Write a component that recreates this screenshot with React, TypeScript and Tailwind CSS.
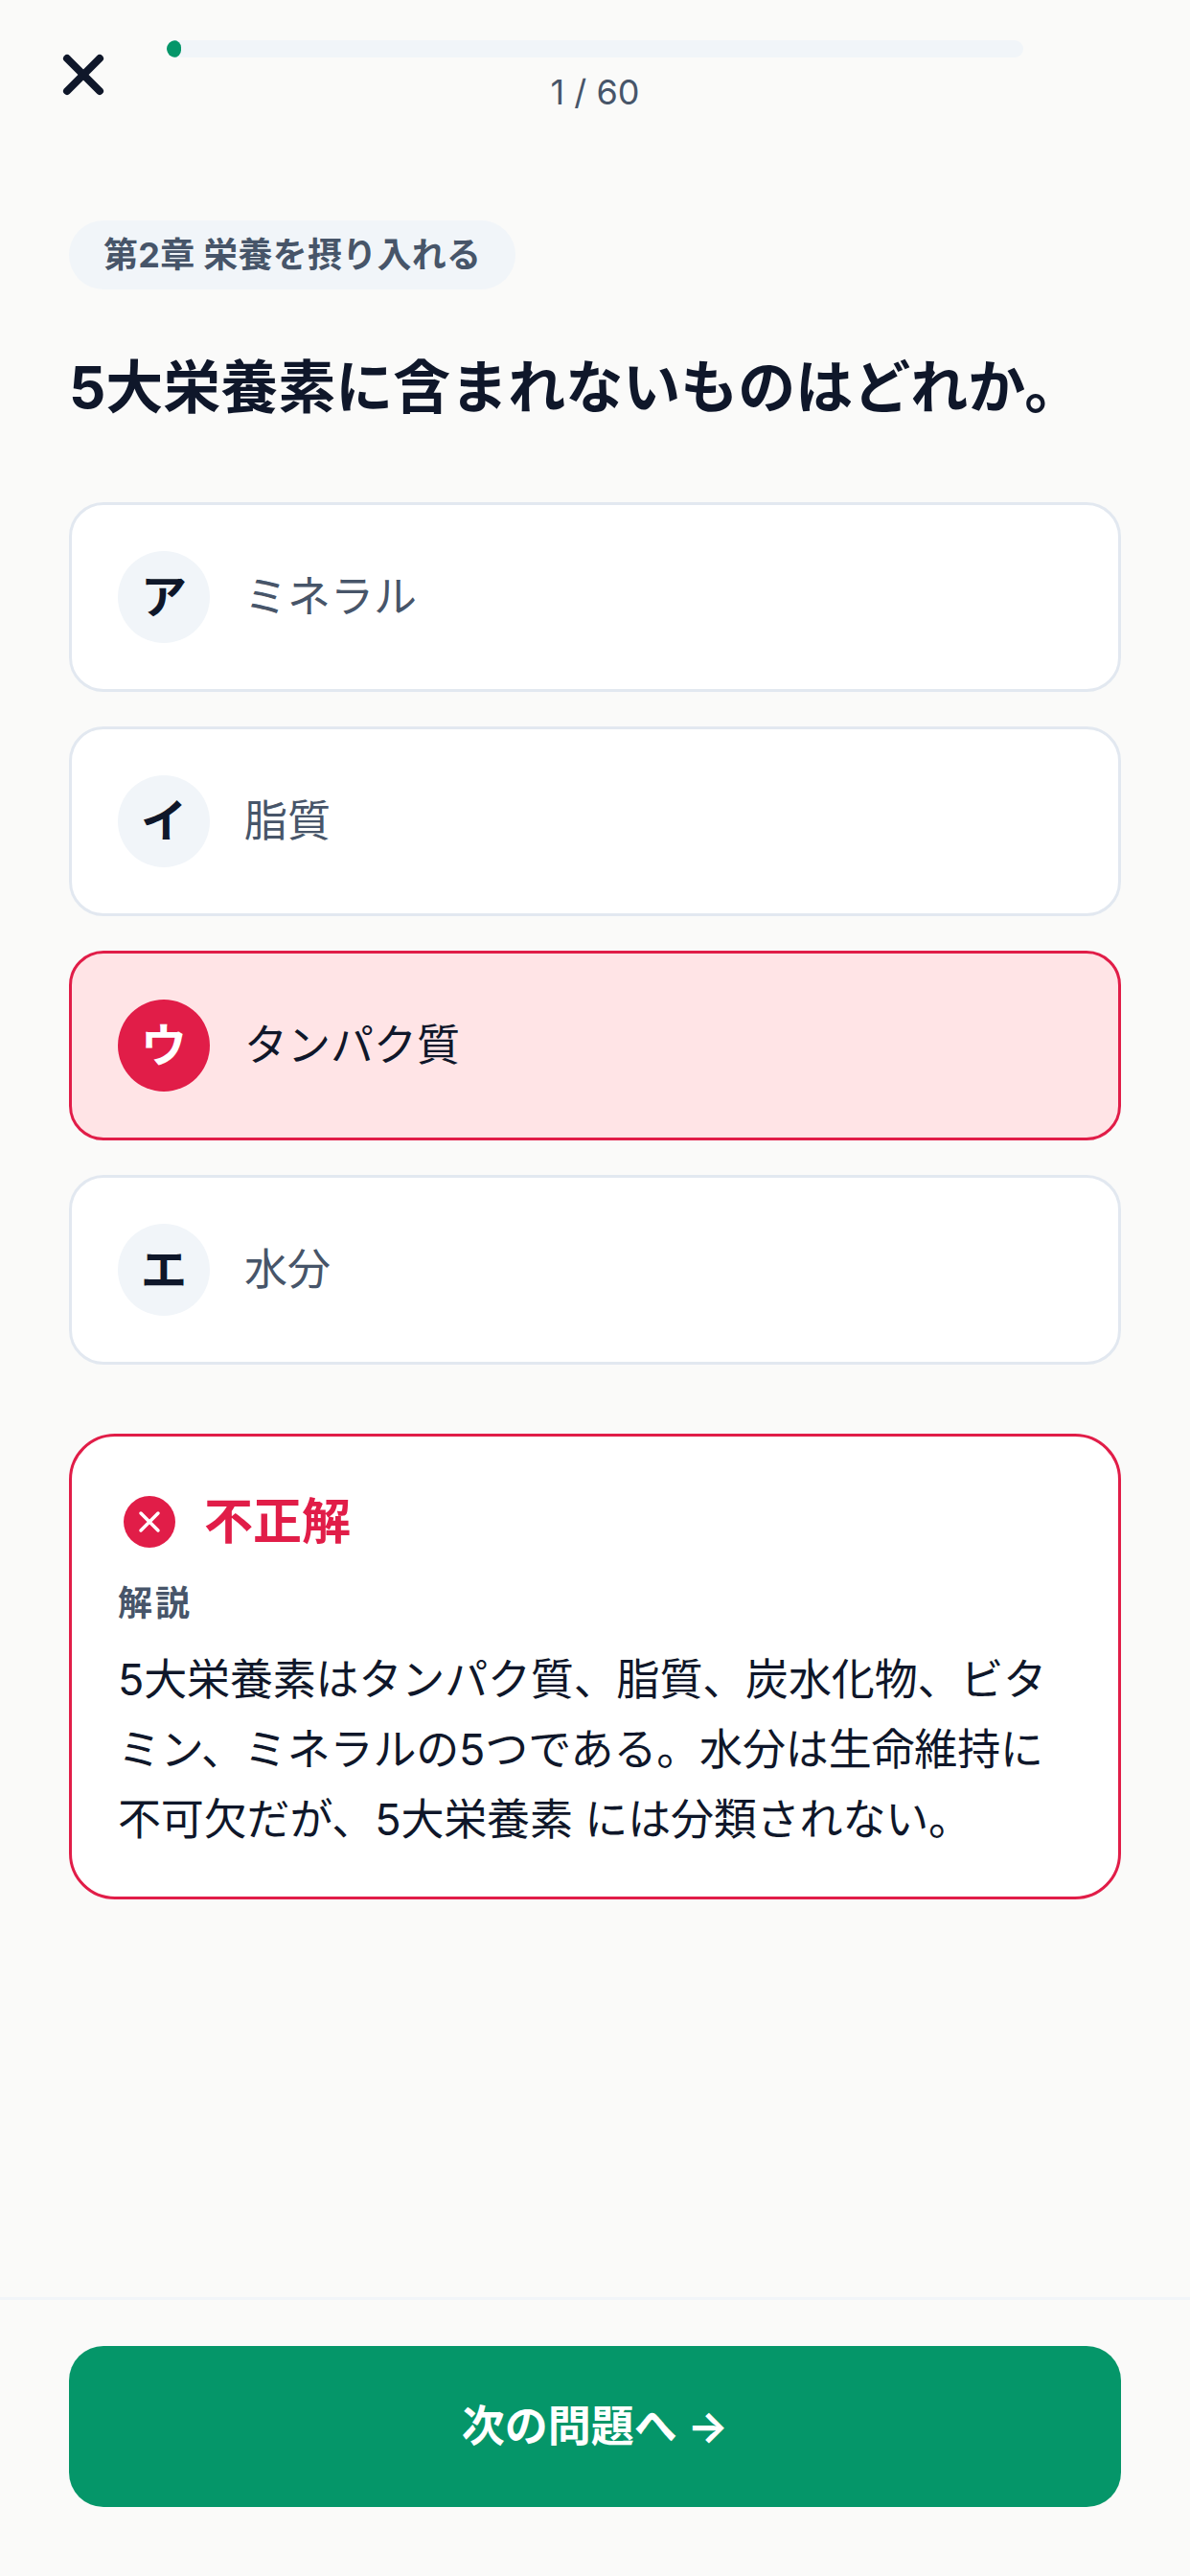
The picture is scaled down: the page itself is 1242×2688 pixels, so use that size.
const options = [
  { label: "ア", text: "ミネラル" },
  { label: "イ", text: "脂質" },
  { label: "ウ", text: "タンパク質", wrong: true },
  { label: "エ", text: "水分" },
]

const OptionCard = ({ label, text, wrong }: { label: string; text: string; wrong?: boolean }) => {
  return (
    <div className={wrong
      ? "flex items-center gap-[36px] rounded-[36px] border-[3px] border-[#e11d48] bg-[#ffe4e6] p-[48px]"
      : "flex items-center gap-[36px] rounded-[36px] border-[3px] border-[#e2e8f0] bg-white p-[48px]"}>
      <div className={wrong
        ? "flex h-[96px] w-[96px] items-center justify-center rounded-full bg-[#e11d48] text-[48px] font-bold text-white"
        : "flex h-[96px] w-[96px] items-center justify-center rounded-full bg-[#f1f5f9] text-[48px] font-bold text-[#0f172a]"}>
        {label}
      </div>
      <div className={wrong ? "text-[45px] leading-[72px] text-[#0f172a]" : "text-[45px] leading-[72px] text-[#475569]"}>
        {text}
      </div>
    </div>
  )
}

export default function App() {
  return (
    <div className="flex h-[2688px] w-[1242px] flex-col bg-[#fafaf9] font-['Inter','Noto_Sans_CJK_JP',sans-serif]">
      <div className="flex px-[36px] pt-[42px]">
        <div className="w-[138px] pl-[27px] pt-[14px]">
          <svg width="48" height="48" viewBox="0 0 48 48" fill="none" stroke="#0f172a" strokeWidth="8" strokeLinecap="round">
            <path d="M7 5 L41 39" />
            <path d="M41 5 L7 39" />
          </svg>
        </div>
        <div className="flex flex-1 flex-col items-center">
          <div className="h-[18px] w-full overflow-hidden rounded-full bg-[#f1f5f9]">
            <div className="h-full w-[15px] rounded-full bg-[#059669]"></div>
          </div>
          <div className="mt-[12px] text-[36px] leading-[48px] text-[#475569]">1 / 60</div>
        </div>
        <div className="w-[138px]"></div>
      </div>

      <div className="flex flex-1 flex-col px-[72px] pt-[110px]">
        <div className="self-start rounded-full bg-[#f1f5f9] px-[36px] py-[12px] text-[36px] font-bold leading-[48px] tracking-[0.25px] text-[#475569]">
          第2章 栄養を摂り入れる
        </div>
        <div className="mt-[60px] text-[60px] font-bold leading-[84px] text-[#0f172a]">
          5大栄養素に含まれないものはどれか。
        </div>

        <div className="mt-[78px] flex flex-col gap-[36px]">
          {options.map((o) => (
            <OptionCard key={o.label} label={o.label} text={o.text} wrong={o.wrong} />
          ))}
        </div>

        <div className="mt-[72px] rounded-[48px] border-[3px] border-[#e11d48] bg-white px-[48px] pb-[44px] pt-[48px]">
          <div className="flex items-center gap-[30px] pl-[6px]">
            <svg width="54" height="54" viewBox="0 0 54 54">
              <circle cx="27" cy="27" r="27" fill="#e11d48" />
              <path d="M18 18 L36 36 M36 18 L18 36" stroke="white" strokeWidth="3.5" strokeLinecap="round" />
            </svg>
            <div className="text-[51px] font-bold leading-[82px] text-[#e11d48]">不正解</div>
          </div>
          <div className="mt-[20px] text-[36px] font-bold leading-[48px] tracking-[3px] text-[#475569]">解説</div>
          <div className="mt-[19px] text-[45px] leading-[73px] tracking-[-0.15px] text-[#0f172a]">
            5大栄養素はタンパク質、脂質、炭水化物、ビタミン、ミネラルの5つである。水分は生命維持に不可欠だが、5大栄養素 には分類されない。
          </div>
        </div>
      </div>

      <div className="border-t-[3px] border-[#f1f5f9] px-[72px] pb-[72px] pt-[48px]">
        <div className="flex h-[168px] items-center justify-center rounded-[36px] bg-[#059669] text-[45px] font-bold text-white">
          次の問題へ →
        </div>
      </div>
    </div>
  )
}
